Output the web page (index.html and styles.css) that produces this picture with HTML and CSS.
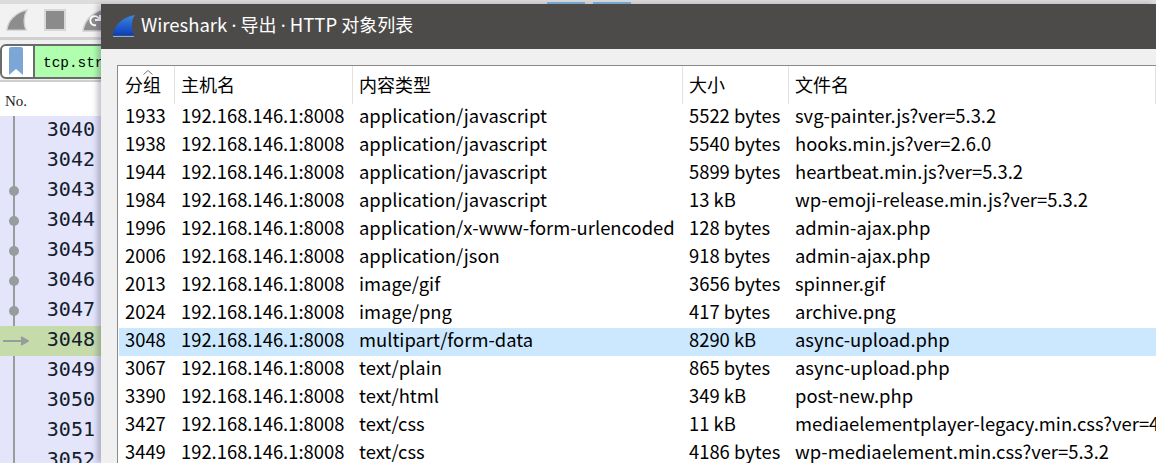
FILE: index.html
```html
<!DOCTYPE html>
<html lang="zh">
<head>
<meta charset="utf-8">
<title>Wireshark</title>
<link rel="stylesheet" href="styles.css">
</head>
<body>
<div class="main">
  <div class="topstrip"><span class="tabmark"></span><span class="tabmark"></span></div>
  <div class="toolbar">
    <svg class="tool" width="22" height="24" viewBox="0 0 24 26"><path d="M1 24C2 14 10 5 23 2C19 9 19 17 22 24Z" fill="#8d8d8d" stroke="#d2d2d2" stroke-width="1.5"/></svg>
    <span class="stopbtn"></span>
    <svg class="tool" width="24" height="26" viewBox="0 0 24 26"><path d="M1 24C2 14 10 5 23 2C19 9 19 17 22 24Z" fill="#8d8d8d" stroke="#d2d2d2" stroke-width="1.5"/><path d="M14 18a4.5 4.5 0 1 1 3-6M18 8v5h-5" fill="none" stroke="#fff" stroke-width="2"/></svg>
  </div>
  <div class="filter">
    <span class="bookmark"><svg width="14" height="28" viewBox="0 0 14 28"><path d="M0 2Q0 0 2 0H12Q14 0 14 2V28L7 22L0 28Z" fill="#7ba6d6"/></svg></span>
    <span class="filtertext">tcp.stream</span>
  </div>
  <div class="colhead">No.</div>
  <div class="packets">
    <span class="guide"></span>
    <div class="pkt"><span class="num">3040</span></div>
    <div class="pkt"><span class="num">3042</span></div>
    <div class="pkt"><span class="dot"></span><span class="num">3043</span></div>
    <div class="pkt"><span class="dot"></span><span class="num">3044</span></div>
    <div class="pkt"><span class="dot"></span><span class="num">3045</span></div>
    <div class="pkt"><span class="dot"></span><span class="num">3046</span></div>
    <div class="pkt"><span class="dot"></span><span class="num">3047</span></div>
    <div class="pkt pkt-sel"><svg class="arrow" width="26" height="10" viewBox="0 0 26 10"><path d="M0 5H25M18 1L25 5L18 9" fill="#979c9c" stroke="#979c9c" stroke-width="2"/></svg><span class="num">3048</span></div>
    <div class="pkt"><span class="num">3049</span></div>
    <div class="pkt"><span class="num">3050</span></div>
    <div class="pkt"><span class="num">3051</span></div>
    <div class="pkt"><span class="num">3052</span></div>
  </div>
</div>

<section class="dialog">
  <header class="titlebar">
    <svg class="logo" width="24" height="24" viewBox="0 0 24 24">
      <defs><linearGradient id="fin" x1="0" y1="0" x2="0" y2="1"><stop offset="0" stop-color="#3f86dc"/><stop offset="1" stop-color="#0a3fc0"/></linearGradient></defs>
      <path d="M1 21C2 12 10 3 23 1C19 7 19 15 22 21Z" fill="url(#fin)"/>
      <path d="M1 22H22V23H1Z" fill="#7fb2e8"/>
    </svg>
    <span class="title">Wireshark <span class="sep">·</span> <span class="cjk">导出</span> <span class="sep">·</span> HTTP <span class="cjk">对象列表</span></span>
  </header>
  <div class="dialogbody">
    <div class="table">
      <div class="row head">
        <span class="cell sorted">分组<svg class="caret" width="10" height="5" viewBox="0 0 10 5"><path d="M0.5 4.5L5 0.5L9.5 4.5" fill="none" stroke="#777"/></svg></span><span class="cell">主机名</span><span class="cell">内容类型</span><span class="cell">大小</span><span class="cell">文件名</span>
      </div>
      <div class="row"><span class="cell">1933</span><span class="cell">192.168.146.1:8008</span><span class="cell">application/javascript</span><span class="cell">5522 bytes</span><span class="cell">svg-painter.js?ver=5.3.2</span></div>
      <div class="row"><span class="cell">1938</span><span class="cell">192.168.146.1:8008</span><span class="cell">application/javascript</span><span class="cell">5540 bytes</span><span class="cell">hooks.min.js?ver=2.6.0</span></div>
      <div class="row"><span class="cell">1944</span><span class="cell">192.168.146.1:8008</span><span class="cell">application/javascript</span><span class="cell">5899 bytes</span><span class="cell">heartbeat.min.js?ver=5.3.2</span></div>
      <div class="row"><span class="cell">1984</span><span class="cell">192.168.146.1:8008</span><span class="cell">application/javascript</span><span class="cell">13 kB</span><span class="cell">wp-emoji-release.min.js?ver=5.3.2</span></div>
      <div class="row"><span class="cell">1996</span><span class="cell">192.168.146.1:8008</span><span class="cell">application/x-www-form-urlencoded</span><span class="cell">128 bytes</span><span class="cell">admin-ajax.php</span></div>
      <div class="row"><span class="cell">2006</span><span class="cell">192.168.146.1:8008</span><span class="cell">application/json</span><span class="cell">918 bytes</span><span class="cell">admin-ajax.php</span></div>
      <div class="row"><span class="cell">2013</span><span class="cell">192.168.146.1:8008</span><span class="cell">image/gif</span><span class="cell">3656 bytes</span><span class="cell">spinner.gif</span></div>
      <div class="row"><span class="cell">2024</span><span class="cell">192.168.146.1:8008</span><span class="cell">image/png</span><span class="cell">417 bytes</span><span class="cell">archive.png</span></div>
      <div class="row selected"><span class="cell">3048</span><span class="cell">192.168.146.1:8008</span><span class="cell">multipart/form-data</span><span class="cell">8290 kB</span><span class="cell">async-upload.php</span></div>
      <div class="row"><span class="cell">3067</span><span class="cell">192.168.146.1:8008</span><span class="cell">text/plain</span><span class="cell">865 bytes</span><span class="cell">async-upload.php</span></div>
      <div class="row"><span class="cell">3390</span><span class="cell">192.168.146.1:8008</span><span class="cell">text/html</span><span class="cell">349 kB</span><span class="cell">post-new.php</span></div>
      <div class="row"><span class="cell">3427</span><span class="cell">192.168.146.1:8008</span><span class="cell">text/css</span><span class="cell">11 kB</span><span class="cell">mediaelementplayer-legacy.min.css?ver=4.2.13</span></div>
      <div class="row"><span class="cell">3449</span><span class="cell">192.168.146.1:8008</span><span class="cell">text/css</span><span class="cell">4186 bytes</span><span class="cell">wp-mediaelement.min.css?ver=5.3.2</span></div>
    </div>
  </div>
</section>
</body>
</html>
```
FILE: styles.css
```css
* { box-sizing: border-box; }
html, body { margin: 0; height: 100%; }
body {
  position: relative;
  width: 1156px;
  height: 463px;
  overflow: hidden;
  background: #f0f0f0;
  font-family: "Noto Sans CJK SC", "Noto Sans", sans-serif;
  color: #000;
}

/* main Wireshark window behind the dialog */
.main { display: flex; flex-direction: column; height: 463px; }
.topstrip {
  height: 4px;
  flex: none;
  display: flex;
  gap: 8px;
  padding: 2px 0 0 547px;
  background: #dcdcdc;
}
.tabmark { width: 38px; height: 2px; background: #7db0dc; }
.toolbar {
  height: 36px;
  flex: none;
  display: flex;
  align-items: center;
  gap: 16px;
  padding: 0 0 2px 6px;
  background: #f2f2f2;
  border-bottom: 3px solid #cfcfcf;
}
.tool { flex: none; }
.stopbtn {
  width: 22px;
  height: 22px;
  flex: none;
  background: #8b8b8b;
  border: 2px solid #d8d8d8;
}
.filter {
  height: 35px;
  flex: none;
  margin: 4px 0 0 0;
  display: flex;
  align-items: stretch;
  background: #fff;
  border: 2px solid #6b6b6b;
  border-radius: 6px;
  overflow: hidden;
}
.bookmark {
  width: 33px;
  flex: none;
  padding: 1px 0 0 7px;
  border-right: 2px solid #6b6b6b;
}
.filtertext {
  flex: 1;
  padding-left: 8px;
  background: #afffaf;
  font: 14.4px/34px "Liberation Mono", monospace;
  white-space: nowrap;
}
.colhead {
  height: 36px;
  flex: none;
  margin-top: 1px;
  padding-left: 5px;
  background: #fff;
  border-top: 2px solid #cfcfcf;
  font: 15px/39px "Liberation Serif", serif;
  color: #222;
}
.packets {
  position: relative;
  flex: 1;
  width: 101px;
  overflow: hidden;
  background: #e4e4fb;
}
.guide {
  position: absolute;
  left: 13px;
  top: 0;
  bottom: 0;
  width: 2px;
  background: #979c9c;
}
.pkt {
  position: relative;
  height: 30px;
  padding-right: 6px;
  text-align: right;
  font: 500 20px/26px "DejaVu Sans Mono", monospace;
  color: #12202c;
}
.pkt-sel { background: #c5dcaa; }
.dot {
  position: absolute;
  left: 9px;
  top: 10px;
  width: 10px;
  height: 10px;
  border-radius: 50%;
  background: #979c9c;
}
.arrow { position: absolute; left: 3px; top: 10px; }

/* dialog floats above the main window */
.dialog {
  position: absolute;
  left: 101px;
  top: 4px;
  width: 1055px;
  height: 459px;
  display: flex;
  flex-direction: column;
  box-shadow: -4px 0 5px rgba(60, 50, 90, .28);
}
.titlebar {
  height: 45px;
  flex: none;
  display: flex;
  align-items: center;
  gap: 5px;
  padding: 0 0 2px 11px;
  background: #4d4b49;
  color: #fff;
}
.logo { flex: none; }
.title { font-size: 18.5px; line-height: 26px; white-space: nowrap; padding-bottom: 2px; }
.cjk { font-size: 18px; }
.sep { font-family: "Noto Sans", sans-serif; }
.dialogbody {
  flex: 1;
  min-height: 0;
  padding: 16px 0 0 16px;
  background: #f0f0f0;
}
.table {
  height: 100%;
  padding-left: 1px;
  background: #fff;
  border-top: 1px solid #8a8a8a;
  border-left: 1px solid #8a8a8a;
  overflow: hidden;
}
.row {
  display: grid;
  grid-template-columns: 56px 178px 330px 106px 1fr;
  align-items: start;
  height: 28px;
  font-size: 18.4px;
  line-height: 23px;
  white-space: nowrap;
}
.cell { padding-left: 6px; }
.head { height: 38px; align-items: stretch; font-size: 18px; }
.head .cell {
  position: relative;
  line-height: 36px;
  border-right: 1px solid #e2e2e2;
}
.caret { position: absolute; left: 24px; top: 4px; }
.selected { background: #cce8ff; }
```
